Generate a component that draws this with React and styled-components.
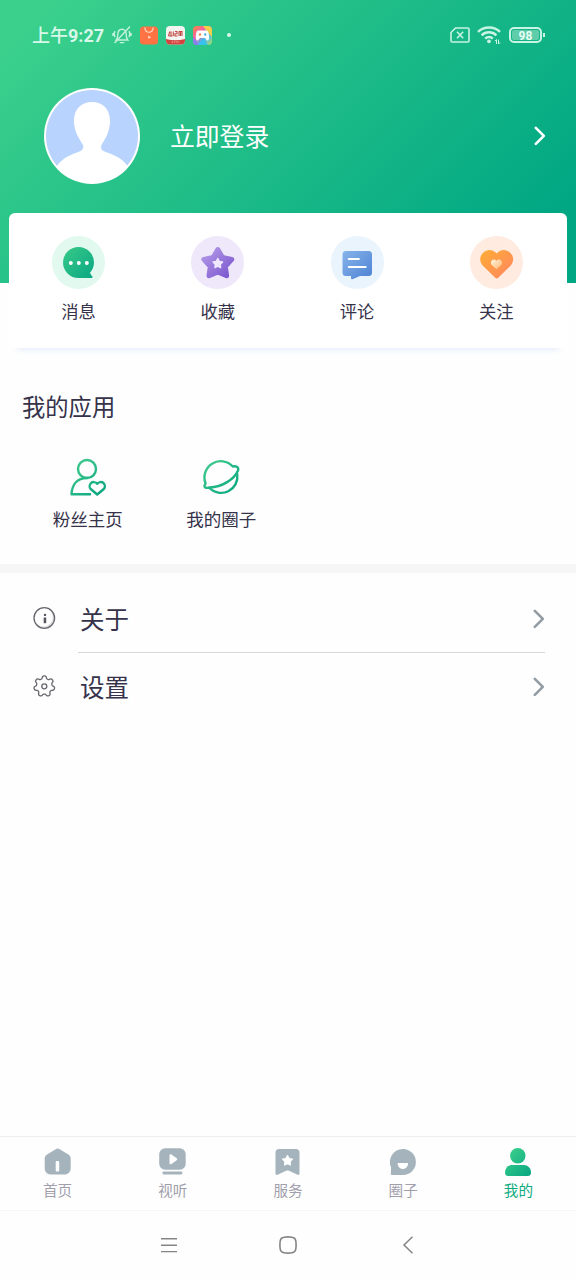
import React, { useState } from "react";
import styled, { createGlobalStyle } from "styled-components";

// status bar icons
const MutedBell = () => (
  <svg width="20" height="20" viewBox="0 0 20 20" fill="none" stroke="#c4f2dc" strokeWidth="1.4">
    <path d="M4.2 15h11.6c-1.3-1.4-1.6-2.7-1.6-5.4 0-3.3-1.5-5.4-4.2-5.4S5.8 6.3 5.8 9.6c0 2.7-.3 4-1.6 5.4z" />
    <path d="M7.8 17.600h4.400M18 1.500L2.600 18M3 6.200c-1.100 1.800-1.100 4 0 6M1 8v3M17 6.200c1.100 1.800 1.100 4 0 6M19 8v3" />
  </svg>
);

const BagApp = () => (
  <svg width="18" height="19" viewBox="0 0 18 19">
    <rect y=".5" width="18" height="18" rx="3.5" fill="#ff7243" />
    <path d="M4.8 1.5c.4 6.3 8 6.3 8.4 0" fill="none" stroke="#ffd9bf" strokeWidth="1.2" />
    <path d="M8 9.5l3 1.7-2.5 1.6z" fill="#ffe3d4" />
  </svg>
);

const NewsApp = () => (
  <svg width="19" height="19" viewBox="0 0 19 19">
    <rect width="19" height="18.5" rx="4" fill="#f4f5f1" />
    <path d="M0 13c6 1.700 13 1.700 19 0v1.500a4 4 0 0 1-4 4H4a4 4 0 0 1-4-4z" fill="#d5433f" />
    <path d="M2.500 10l1.300-4.500M5 5.500V10M2.500 10h4M7.300 5.500V10M9 5.500h2v2.200H9V10h2.500M13 5.500h3V10M13 5.500V10M14.500 5.500V10" fill="none" stroke="#c24744" strokeWidth="1.1" />
    <path d="M5.500 16h8" stroke="#f3b5ae" strokeWidth="1" strokeDasharray="1.5 .8" />
  </svg>
);

const GameApp = () => (
  <svg width="19" height="19" viewBox="0 0 19 19">
    <defs>
      <linearGradient id="game" x1="0" y1="0" x2="1" y2="1">
        <stop offset="0" stopColor="#ff8a3c" />
        <stop offset=".35" stopColor="#f65fa0" />
        <stop offset=".65" stopColor="#48b7f2" />
        <stop offset="1" stopColor="#b8e05b" />
      </linearGradient>
    </defs>
    <rect width="19" height="19" rx="4" fill="url(#game)" />
    <path d="M10 0h5a4 4 0 0 1 4 4v7C16 8 13 4 10 0z" fill="#f2cf4a" />
    <path d="M5 19l5-6 5 6z" fill="#35c3ee" />
    <path d="M0 11l6 8H4a4 4 0 0 1-4-4z" fill="#8e7bf0" />
    <path d="M5 4.500h8.500c1.600 0 2.600 3 2.600 6.500 0 3.500-1.300 4-2.500 2.900L12 12H7l-1.600 1.900C4 15 2.800 14.500 2.800 11c0-3.500.8-6.500 2.200-6.500z" fill="#fff" />
    <circle cx="7" cy="8.5" r="1.2" fill="#ed8a4e" />
    <circle cx="12.2" cy="8.5" r="1.2" fill="#4cafe8" />
  </svg>
);

const NoSim = () => (
  <svg width="20" height="16" viewBox="0 0 20 16" fill="none" stroke="#c8f4e3" strokeWidth="1.6">
    <path d="M5.500 1h12.200c.8 0 1.300.5 1.300 1.300v11.400c0 .8-.5 1.300-1.300 1.300H2.300C1.500 15 1 14.500 1 13.700V5.500z" />
    <path d="M7 4.800l6.200 6.400M13.200 4.800L7 11.200" />
  </svg>
);

const Wifi = () => (
  <svg width="24" height="20" viewBox="0 0 24 20" fill="none" stroke="#c8f4e3" strokeWidth="2.4">
    <path d="M1 6.800c5.800-5.800 16.200-5.800 22 0M4.600 10.300c4.200-4 10.600-4 14.800 0M8.200 13.600c2.200-2.200 5.400-2.200 7.600 0" />
    <circle cx="12" cy="16.3" r="1.9" fill="#c8f4e3" stroke="none" />
    <path d="M19.500 19v-4.500l-1.700 1.700M21.500 14.500V19l1.700-1.700" strokeWidth="1" />
  </svg>
);

// avatar
const Avatar = () => (
  <svg width="96" height="96" viewBox="0 0 96 96">
    <defs>
      <clipPath id="face">
        <circle cx="48" cy="48" r="46.5" />
      </clipPath>
    </defs>
    <circle cx="48" cy="48" r="48" fill="#fff" />
    <circle cx="48" cy="48" r="46" fill="#b9d3ff" />
    <path
      clipPath="url(#face)"
      fill="#fff"
      d="M48 14c11.500 0 18.300 8 18 20-.3 9-4 16-8 22-1.500 2.500-1.500 5.500 1.500 7 9.500 4 18.500 6.500 24 15L84 96H12l1-18c5.500-8.500 14-11 23.500-15 3-1.500 3.500-4.500 2-7C34.500 50 30.300 43 30 34c-.3-12 6.500-20 18-20z"
    />
  </svg>
);

const Chevron = ({ color, width = 2.6 }) => (
  <svg width="12" height="20" viewBox="0 0 12 20" fill="none" stroke={color} strokeWidth={width} strokeLinecap="round" strokeLinejoin="round">
    <path d="M1.800 1.800l8 8-8 8" />
  </svg>
);

// shortcut icons
const MessageIcon = () => (
  <svg width="53" height="53" viewBox="0 0 53 53">
    <defs>
      <linearGradient id="msg" x1="0" y1="0" x2="1" y2="1">
        <stop offset="0" stopColor="#38ca88" />
        <stop offset="1" stopColor="#0ba783" />
      </linearGradient>
    </defs>
    <path d="M26.500 11a15.500 15.500 0 0 1 15.500 15.500c0 3.800-1.500 7.500-4 10.300.6 1.500 1.300 2.600 2.300 3.700.5.600.2 1.500-.8 1.500h-13a15.500 15.500 0 0 1 0-31z" fill="url(#msg)" />
    <circle cx="18.8" cy="27" r="2" fill="#fff" />
    <circle cx="26.8" cy="27" r="2" fill="#fff" />
    <circle cx="34.8" cy="27" r="2" fill="#fff" />
  </svg>
);

const StarIcon = () => (
  <svg width="53" height="53" viewBox="0 0 53 53">
    <defs>
      <linearGradient id="star" gradientUnits="userSpaceOnUse" x1="12" y1="12" x2="40" y2="42">
        <stop offset="0" stopColor="#b79de9" />
        <stop offset="1" stopColor="#7954cd" />
      </linearGradient>
    </defs>
    <path d="M26.800 13.500l4.700 8 9.300 1.900-6.500 7.100 1.300 9.200-8.800-3.700-8.800 3.700 1.300-9.200-6.500-7.100 9.300-1.900z" fill="url(#star)" stroke="url(#star)" strokeWidth="5" strokeLinejoin="round" />
    <path d="M26.800 22.500l1.400 2.900 3.300.6-2.300 2.400.4 3.300-2.800-1.500-2.800 1.500.4-3.300-2.300-2.400 3.300-.6z" fill="#efe7ff" stroke="#efe7ff" strokeWidth="1.5" strokeLinejoin="round" />
  </svg>
);

const CommentIcon = () => (
  <svg width="53" height="53" viewBox="0 0 53 53">
    <defs>
      <linearGradient id="cmt" x1="0" y1="0" x2="1" y2="1">
        <stop offset="0" stopColor="#88b4ea" />
        <stop offset="1" stopColor="#4c82d5" />
      </linearGradient>
    </defs>
    <path d="M15 15h22.500a3.500 3.500 0 0 1 3.500 3.500v18a3.500 3.500 0 0 1-3.500 3.500H29l-7.500 3.200c-1 .3-1.500 0-1.500-1V40h-5a3.500 3.500 0 0 1-3.500-3.500v-18A3.500 3.500 0 0 1 15 15z" fill="url(#cmt)" />
    <path d="M17.800 23h10M17.800 31h16.800" stroke="#fff" strokeWidth="2.2" strokeLinecap="round" />
  </svg>
);

const HeartIcon = () => (
  <svg width="53" height="53" viewBox="0 0 53 53">
    <defs>
      <linearGradient id="heart" x1="0" y1="0" x2="1" y2="1">
        <stop offset="0" stopColor="#ffad35" />
        <stop offset="1" stopColor="#ff8562" />
      </linearGradient>
      <linearGradient id="heartInner" x1="0" y1="0" x2="1" y2="1">
        <stop offset="0" stopColor="#fff5df" />
        <stop offset="1" stopColor="#ffb875" />
      </linearGradient>
    </defs>
    <path d="M26.700 17.500c3.500-4.500 9.500-4.600 13.300-1.100 4.200 4 4.100 9.600.5 13.300L28.200 41.700c-1 1-2 1-3 0L12.900 29.700c-3.600-3.700-3.700-9.300.5-13.300 3.800-3.500 9.800-3.400 13.300 1.100z" fill="url(#heart)" />
    <path d="M26.500 25c1.300-1.800 3.300-1.700 4.500-.5 1.400 1.500 1.300 3.300.2 4.500l-4.700 4.300L21.800 29c-1.300-1.200-1.200-3.200 0-4.500 1.200-1.300 3.400-1.300 4.700.5z" fill="url(#heartInner)" />
  </svg>
);

// app icons
const AppGradient = ({ id }) => (
  <defs>
    <linearGradient id={id} gradientUnits="userSpaceOnUse" x1="4" y1="2" x2="34" y2="36">
      <stop offset="0" stopColor="#43cb8d" />
      <stop offset="1" stopColor="#08a681" />
    </linearGradient>
  </defs>
);

const FansIcon = () => (
  <svg width="38" height="38" viewBox="0 0 38 38" fill="none" stroke="url(#fans)" strokeWidth="2.4" strokeLinecap="round" strokeLinejoin="round">
    <AppGradient id="fans" />
    <circle cx="18" cy="11" r="9" />
    <path d="M18 20C8 20 3 26.500 2.500 36.300h18.500" />
    <path d="M28.200 25.800c1.500-2.200 4.800-2.200 6.400-.6 1.700 1.800 1.500 4.400.2 5.800l-6.600 5.500-6.500-5.500c-1.400-1.400-1.500-4 .2-5.800 1.600-1.600 4.800-1.600 6.300.6z" />
  </svg>
);

const PlanetIcon = () => (
  <svg width="38" height="38" viewBox="0 0 38 38" fill="none" stroke="url(#planet)" strokeWidth="2.4" strokeLinecap="round" strokeLinejoin="round">
    <AppGradient id="planet" />
    <path d="M3.600 25.500A16.300 16.300 0 0 1 30.800 8.500C34.300 7.600 37.100 9.500 36 12.500 32.500 21.300 20 29 7.500 29.500 3.500 30.700 1 29 3.600 25.500z" />
    <path d="M35.300 16.500A16.300 16.300 0 0 1 7.500 30" />
  </svg>
);

// list icons
const InfoIcon = () => (
  <svg width="24" height="24" viewBox="0 0 24 24">
    <circle cx="12.300" cy="12" r="10" fill="#dedfe1" />
    <circle cx="11.300" cy="11" r="9.5" fill="#fefefe" />
    <circle cx="12.300" cy="12" r="10.300" fill="none" stroke="#66676d" strokeWidth="1.3" />
    <circle cx="13" cy="8.900" r="1.2" fill="#55565e" />
    <path d="M11.700 11.500h2.500v5.700h-2.500z" fill="#55565e" />
  </svg>
);

// seven rounded teeth, first one pointing up
const gearPoints = Array.from({ length: 140 }, (_, i) => {
  const angle = (i / 140) * Math.PI * 2;
  const radius = 9.1 + 1.35 * Math.tanh(1.8 * Math.cos(7 * angle));
  return `${(12.3 + radius * Math.sin(angle)).toFixed(2)},${(12.3 - radius * Math.cos(angle)).toFixed(2)}`;
}).join(" ");

const GearIcon = () => (
  <svg width="24" height="24" viewBox="0 0 24 24" fill="none" stroke="#66676d" strokeWidth="1.3" strokeLinejoin="round">
    <polygon points={gearPoints} />
    <circle cx="12.3" cy="12.3" r="2.5" />
  </svg>
);

// tab icons
const HomeTab = () => (
  <svg width="28" height="28" viewBox="0 0 28 28">
    <path d="M11.700 1.200c1.500-1 2.500-1 4 0l9 5.500c1.300.9 2 2.200 2 3.800V20c0 4-2.500 6.500-6.500 6.500h-13C3.200 26.500.7 24 .7 20v-9.500c0-1.600.7-2.900 2-3.800z" fill="#a5b3bc" />
    <rect x="11.700" y="13" width="3.500" height="10.500" rx="1" fill="#fff" />
  </svg>
);

const VideoTab = () => (
  <svg width="28" height="28" viewBox="0 0 28 28">
    <rect x=".2" y=".2" width="26.500" height="21.500" rx="6" fill="#a5b3bc" />
    <path d="M10.500 7.500c0-1.200 1-1.600 2-1l5.200 3.700c.8.6.8 1.500 0 2.100l-5.200 3.600c-1 .6-2 .2-2-1z" fill="#fff" />
    <rect x="3.400" y="23.500" width="20" height="2.900" rx="1.400" fill="#a5b3bc" />
  </svg>
);

const ServiceTab = () => (
  <svg width="28" height="28" viewBox="0 0 28 28">
    <path d="M5 1h17c2 0 3.500 1.200 3.500 3.500v20.700c0 1.600-1 2.100-2.500 1.400l-8-3.900c-1-.4-1.900-.4-2.900 0l-8 3.900c-1.500.7-2.600.2-2.600-1.400V4.500C1.500 2.200 3 1 5 1z" fill="#a5b3bc" />
    <path d="M13.500 7.600l1.600 2.900 3.300.7-2.300 2.500.4 3.300-3-1.400-3 1.400.4-3.300-2.300-2.500 3.300-.7z" fill="#fff" stroke="#fff" strokeWidth="1.2" strokeLinejoin="round" />
  </svg>
);

const CircleTab = () => (
  <svg width="28" height="28" viewBox="0 0 28 28">
    <path d="M13.900 1a13 13 0 1 1 0 26H3.100c-1 0-1.300-.7-1.300-1.500l.3-6A13 13 0 0 1 13.900 1z" fill="#a5b3bc" />
    <path d="M9.500 15h8.700c.7 0 1 .5.900 1.200-1.200 6.400-9.300 6.400-10.500 0-.1-.7.200-1.200.9-1.200z" fill="#fff" />
  </svg>
);

const MineTab = () => (
  <svg width="28" height="28" viewBox="0 0 28 28">
    <defs>
      <linearGradient id="mine" gradientUnits="userSpaceOnUse" x1="2" y1="2" x2="27" y2="27">
        <stop offset="0" stopColor="#3dd08b" />
        <stop offset="1" stopColor="#08a782" />
      </linearGradient>
    </defs>
    <circle cx="13.800" cy="7.800" r="7.700" fill="url(#mine)" />
    <path d="M8.500 17h11c4.500 0 7.500 3.200 7.500 7.500 0 2.300-1 3.400-3.200 3.400H4.200C2 27.900 1 26.800 1 24.500 1 20.200 4 17 8.500 17z" fill="url(#mine)" />
  </svg>
);

const shortcuts = [
  { label: "消息", color: "#e1f9ee", icon: <MessageIcon /> },
  { label: "收藏", color: "#efe8fb", icon: <StarIcon /> },
  { label: "评论", color: "#eaf4fd", icon: <CommentIcon /> },
  { label: "关注", color: "#ffebdf", icon: <HeartIcon /> },
];

const apps = [
  { label: "粉丝主页", icon: <FansIcon /> },
  { label: "我的圈子", icon: <PlanetIcon /> },
];

const tabs = [
  { label: "首页", icon: <HomeTab /> },
  { label: "视听", icon: <VideoTab /> },
  { label: "服务", icon: <ServiceTab /> },
  { label: "圈子", icon: <CircleTab /> },
  { label: "我的", icon: <MineTab /> },
];

export default function App() {
  const [active, setActive] = useState("我的");

  return (
    <>
      <GlobalStyle />
      <Screen>
        <Header>
          <StatusBar>
            <Clock>上午<b>9:27</b></Clock>
            <Notifications>
              <MutedBell />
              <BagApp />
              <NewsApp />
              <GameApp />
            </Notifications>
            <Dot />
            <Signals>
              <NoSim />
              <Wifi />
              <Battery>
                <Charge>98</Charge>
              </Battery>
            </Signals>
          </StatusBar>
          <Profile>
            <Avatar />
            <Login>立即登录</Login>
            <Chevron color="#fff" />
          </Profile>
        </Header>
        <Card>
          {shortcuts.map((item) => (
            <Shortcut key={item.label}>
              <Bubble $color={item.color}>{item.icon}</Bubble>
              {item.label}
            </Shortcut>
          ))}
        </Card>
        <Title>我的应用</Title>
        <Apps>
          {apps.map((item) => (
            <AppItem key={item.label}>
              {item.icon}
              {item.label}
            </AppItem>
          ))}
        </Apps>
        <List>
          <Row>
            <InfoIcon />
            <RowBody $line>
              关于
              <Chevron color="#939ca3" />
            </RowBody>
          </Row>
          <Row>
            <GearIcon />
            <RowBody>
              设置
              <Chevron color="#939ca3" />
            </RowBody>
          </Row>
        </List>
        <TabBar>
          {tabs.map((tab) => (
            <Tab
              key={tab.label}
              $active={tab.label === active}
              onClick={() => setActive(tab.label)}
            >
              {tab.icon}
              {tab.label}
            </Tab>
          ))}
        </TabBar>
        <SystemNav>
          <svg width="18" height="16" viewBox="0 0 18 16" stroke="#858585" strokeWidth="1.4">
            <path d="M1 1.700h16M1 8.200h16M1 14.600h16" />
          </svg>
          <svg width="18" height="18" viewBox="0 0 18 18" fill="none" stroke="#858585" strokeWidth="1.6">
            <path d="M5 1.200c2.700-.5 5.300-.5 8 0 2.400.3 3.500 1.400 3.800 3.800.4 2.700.4 5.300 0 8-.3 2.400-1.400 3.500-3.800 3.800-2.700.4-5.300.4-8 0-2.400-.3-3.500-1.400-3.800-3.800-.4-2.700-.4-5.300 0-8C1.500 2.600 2.600 1.500 5 1.200z" />
          </svg>
          <svg width="18" height="18" viewBox="0 0 18 18" fill="none" stroke="#858585" strokeWidth="1.5">
            <path d="M14.500.8L6 9l8.500 8.200" />
          </svg>
        </SystemNav>
      </Screen>
    </>
  );
}

// styling
const GlobalStyle = createGlobalStyle`
  * {
    box-sizing: border-box;
  }

  body {
    margin: 0;
    background: #fefefe;
    font-family: Roboto, "Noto Sans CJK SC", sans-serif;
    color: #35324a;
  }

  svg {
    display: block;
    flex-shrink: 0;
  }
`;

const Screen = styled.div`
  display: flex;
  flex-direction: column;
  width: 576px;
  height: 1280px;
  overflow: hidden;
`;

const Header = styled.header`
  height: 283px;
  flex-shrink: 0;
  background: linear-gradient(135deg, #3bd08c 6%, #00a783 90%);
`;

const StatusBar = styled.div`
  display: flex;
  align-items: center;
  height: 70px;
  padding: 0 31px 0 32px;
`;

const Clock = styled.div`
  width: 80px;
  padding-top: 1px;
  font-size: 18px;
  font-weight: 500;
  line-height: 24px;
  white-space: nowrap;
  color: #d9f8e9;

  b {
    font-weight: 700;
  }
`;

const Notifications = styled.div`
  display: flex;
  align-items: center;
  gap: 8px;
`;

const Dot = styled.span`
  width: 4px;
  height: 4px;
  margin-left: 15px;
  border-radius: 50%;
  background: #d9f8e9;
`;

const Signals = styled.div`
  display: flex;
  align-items: center;
  gap: 7px;
  margin-left: auto;
`;

const Battery = styled.div`
  position: relative;
  width: 33px;
  height: 16px;
  margin: 0 3px 0 1px;
  padding: 1px;
  border: 2px solid #c8f4e3;
  border-radius: 5px;

  &::after {
    content: "";
    position: absolute;
    top: 4px;
    right: -5px;
    width: 2px;
    height: 4px;
    background: #c8f4e3;
  }
`;

const Charge = styled.div`
  height: 10px;
  border-radius: 2px;
  background: #5fccaa;
  color: #e6fff5;
  font-size: 12px;
  font-weight: 700;
  line-height: 12px;
  text-align: center;
`;

const Profile = styled.div`
  display: flex;
  align-items: center;
  height: 96px;
  margin-top: 18px;
  padding: 0 30px 0 44px;
`;

const Login = styled.div`
  flex: 1;
  margin-left: 30px;
  padding-top: 3px;
  font-size: 24.8px;
  line-height: 34px;
  color: #fff;
`;

const Card = styled.section`
  display: grid;
  grid-template-columns: repeat(4, 1fr);
  flex-shrink: 0;
  height: 135px;
  margin: -70px 9px 0;
  padding: 23px 1px 0 0;
  border-radius: 6px;
  background: #fff;
  box-shadow: 0 8px 8px -8px #d8e4f8;
`;

const Shortcut = styled.div`
  display: flex;
  flex-direction: column;
  align-items: center;
  gap: 11px;
  font-size: 17.3px;
  line-height: 24px;
`;

const Bubble = styled.div`
  width: 53px;
  height: 53px;
  border-radius: 50%;
  background: ${({ $color }) => $color};
`;

const Title = styled.h2`
  margin: 43px 22px 0;
  font-size: 23.3px;
  font-weight: 400;
  line-height: 34px;
`;

const Apps = styled.div`
  display: flex;
  height: 139px;
  flex-shrink: 0;
  padding: 33px 0 0 21px;
`;

const AppItem = styled.div`
  display: flex;
  flex-direction: column;
  align-items: center;
  gap: 12px;
  width: 133.5px;
  font-size: 17.5px;
  line-height: 24px;
`;

const List = styled.div`
  flex: 1;
  padding-top: 12px;
  border-top: 9px solid #f6f6f6;
`;

const Row = styled.div`
  display: flex;
  align-items: center;
  height: 68px;
  padding: 0 31px 0 32px;

  > svg {
    margin-bottom: 2px;
  }
`;

const RowBody = styled.div`
  display: flex;
  flex: 1;
  align-items: center;
  justify-content: space-between;
  height: 68px;
  margin-left: 22px;
  padding-left: 2px;
  border-bottom: 1px solid ${({ $line }) => ($line ? "#d5d8da" : "transparent")};
  font-size: 24.5px;
`;

const TabBar = styled.nav`
  display: grid;
  grid-template-columns: repeat(5, 1fr);
  flex-shrink: 0;
  height: 75px;
  border-top: 1px solid #eceff1;
  border-bottom: 1px solid #f6f6f6;
`;

const Tab = styled.div`
  display: flex;
  flex-direction: column;
  align-items: center;
  gap: 5px;
  padding-top: 11px;
  font-size: 14.6px;
  line-height: 20px;
  color: ${({ $active }) => ($active ? "#0fab82" : "#a19fac")};
  cursor: pointer;
`;

const SystemNav = styled.div`
  display: flex;
  align-items: center;
  justify-content: space-between;
  flex-shrink: 0;
  height: 69px;
  padding: 0 160px 2px 160px;
`;
